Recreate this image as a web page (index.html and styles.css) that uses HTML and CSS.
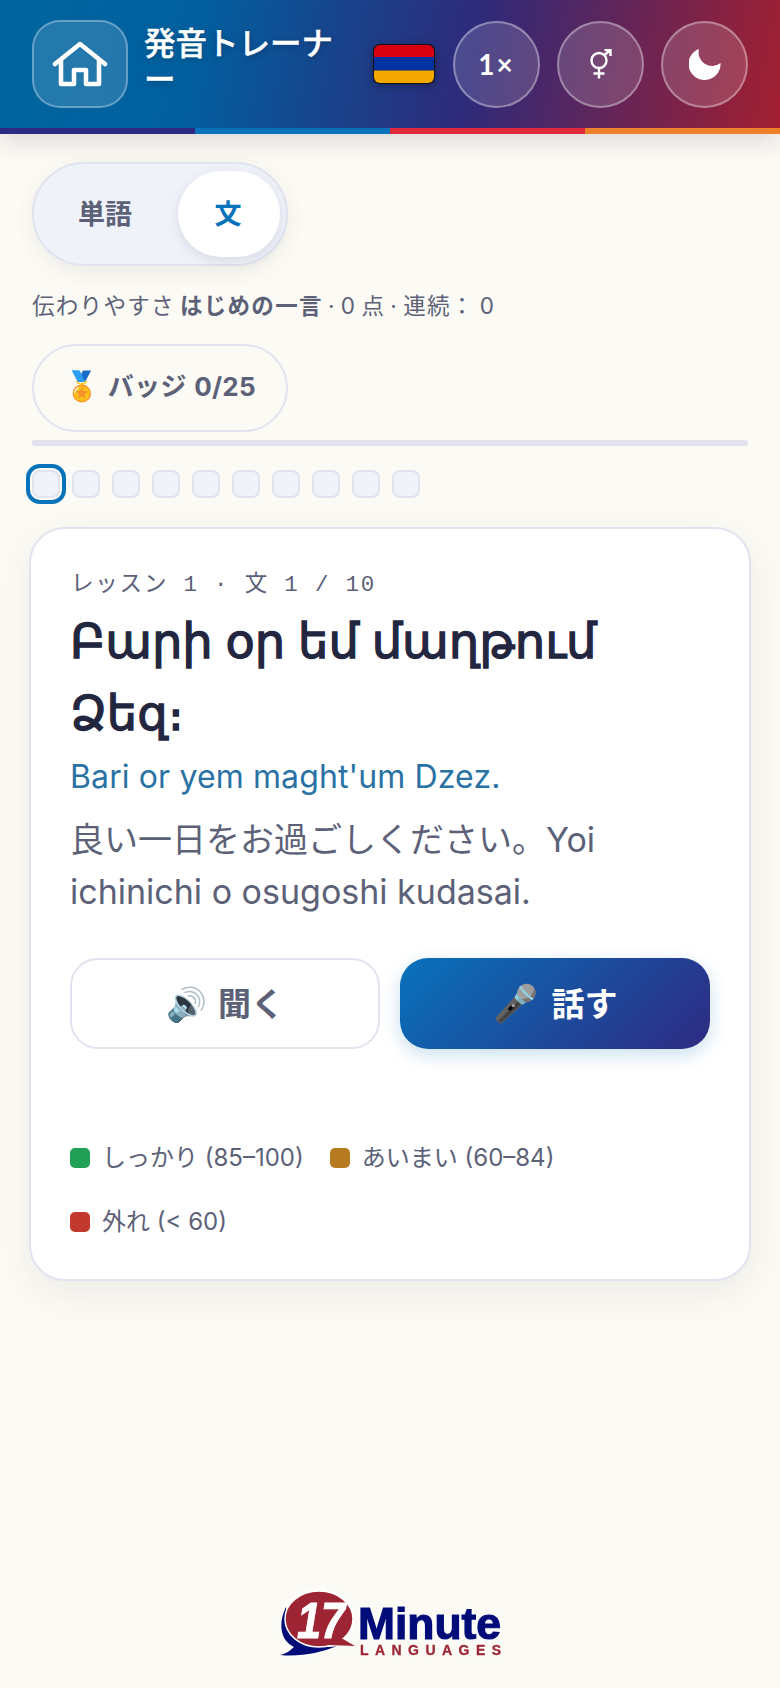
FILE: index.html
```html
<!DOCTYPE html>
<html lang="ja">
<head>
    <meta charset="UTF-8">
    <meta name="viewport" content="width=device-width, initial-scale=1.0">
    <title>発音トレーナー</title>
    <link rel="stylesheet" href="styles.css">
</head>
<body>
    <header class="topbar">
        <div class="topbar-row">
            <button class="home-btn" aria-label="home">
                <svg width="56" height="46" viewBox="0 0 56 46" fill="none" stroke="#fff" stroke-width="4.500" stroke-linecap="round" stroke-linejoin="round">
                    <path d="M3 23 28 3l25 20"/>
                    <path d="M9 19v24h13V29h12v14h13V19"/>
                </svg>
            </button>
            <h1 class="title">発音トレーナー</h1>
            <svg class="flag" width="64" height="42" viewBox="0 0 64 42">
                <rect x="1" y="1" width="62" height="40" rx="7" fill="#111"/>
                <path d="M2 8a6 6 0 0 1 6-6h48a6 6 0 0 1 6 6v6H2z" fill="#d90012"/>
                <rect x="2" y="14" width="60" height="13.500" fill="#0033a0"/>
                <path d="M2 27.500h60V34a6 6 0 0 1-6 6H8a6 6 0 0 1-6-6z" fill="#f2a800"/>
            </svg>
            <button class="round-btn speed">1×</button>
            <button class="round-btn" aria-label="voice">
                <svg width="22" height="30" viewBox="0 0 22 30" fill="none" stroke="#fff" stroke-width="2.400">
                    <circle cx="9" cy="11.500" r="7.500"/>
                    <path d="M14.500 6 20.500 1M14.500 1h6v6M9 19v10.500M3.500 24.500h11"/>
                </svg>
            </button>
            <button class="round-btn" aria-label="theme">
                <svg width="32" height="32" viewBox="0 0 32 32"><path d="M10 1A13.500 13.500 0 0 0 31.500 15 16 16 0 1 1 10 1z" fill="#fff"/></svg>
            </button>
        </div>
        <div class="stripes"><span></span><span></span><span></span><span></span></div>
    </header>

    <main>
        <div class="toggle">
            <span class="toggle-item">単語</span>
            <span class="toggle-item active">文</span>
        </div>

        <p class="status">伝わりやすさ <b>はじめの一言</b> · 0 点 · 連続： 0</p>

        <button class="badge-btn"><span class="emoji-big">🏅</span> バッジ 0/25</button>

        <div class="progress"></div>

        <div class="dots">
            <span class="current"></span>
            <span></span><span></span><span></span><span></span>
            <span></span><span></span><span></span><span></span><span></span>
        </div>

        <section class="card">
            <div class="eyebrow">レッスン 1 · 文 1 / 10</div>
            <h2 class="phrase">Բարի օր եմ մաղթում Ձեզ։</h2>
            <p class="roman">Bari or yem maght'um Dzez.</p>
            <p class="meaning">良い一日をお過ごしください。Yoi ichinichi o osugoshi kudasai.</p>

            <div class="actions">
                <button class="action listen">🔊 聞く</button>
                <button class="action speak"><span class="emoji-big">🎤</span> 話す</button>
            </div>

            <div class="legend">
                <span class="legend-item"><i class="green"></i> しっかり (85–100)</span>
                <span class="legend-item"><i class="amber"></i> あいまい (60–84)</span>
                <span class="legend-item"><i class="red"></i> 外れ (&lt; 60)</span>
            </div>
        </section>
    </main>

    <footer class="brand">
        <svg width="228" height="74" viewBox="0 0 228 74">
            <path d="M10 22C2 38 4 56 18 62 14 66 9 69 4 70 24 72 44 68 61 61 40 66 16 52 10 22z" fill="#000c78"/>
            <ellipse cx="43" cy="34" rx="34" ry="28" fill="#9c2433" stroke="#fff" stroke-width="1.500"/>
            <path d="M60 50 79 61 52 60z" fill="#9c2433"/>
            <text x="21" y="53" class="logo-num" textLength="48" lengthAdjust="spacingAndGlyphs">17</text>
            <text x="82" y="54" class="logo-word" textLength="143" lengthAdjust="spacingAndGlyphs">Minute</text>
            <text x="84" y="70" class="logo-sub" textLength="141">LANGUAGES</text>
        </svg>
    </footer>
</body>
</html>
```

FILE: styles.css
```css
* {
  box-sizing: border-box;
}

:root {
  --bg: #fbfaf4;
  --text: #5c6178;
  --dark: #23263f;
  --line: #e1e3ef;
  --soft: #eff2f9;
  --blue: #0872bb;
  --indigo: #2e2a82;
}

body {
  margin: 0;
  min-height: 100vh;
  display: flex;
  flex-direction: column;
  background-color: var(--bg);
  color: var(--text);
  font-family: Inter, "Noto Sans", "Noto Sans CJK JP", "DejaVu Sans", sans-serif;
}

button {
  font: inherit;
  cursor: pointer;
}

/* header */
.topbar {
  background: linear-gradient(100deg, #00669f 0%, #015f9f 25%, #2e2a7a 60%, #a31f30 100%);
  box-shadow: 0 6px 24px rgba(40, 40, 60, 0.16);
}

.topbar-row {
  display: flex;
  align-items: center;
  height: 128px;
  padding: 0 32px;
}

.home-btn {
  flex: none;
  width: 96px;
  height: 88px;
  display: grid;
  place-items: center;
  padding: 0;
  background: rgba(255, 255, 255, 0.14);
  border: 2px solid rgba(255, 255, 255, 0.3);
  border-radius: 28px;
}

.title {
  width: 200px;
  margin: 0 0 4px 16px;
  color: #fff;
  font-size: 31.500px;
  line-height: 36px;
  font-weight: 500;
  -webkit-text-stroke: 0.400px #fff;
  text-shadow: 0 2px 6px rgba(0, 0, 0, 0.25);
}

.flag {
  flex: none;
  margin-left: 28px;
  filter: drop-shadow(0 2px 4px rgba(0, 0, 0, 0.3));
}

.round-btn {
  flex: none;
  width: 87px;
  height: 87px;
  margin-left: 17px;
  display: grid;
  place-items: center;
  padding: 0;
  color: #fff;
  background: rgba(255, 255, 255, 0.15);
  border: 2px solid rgba(255, 255, 255, 0.35);
  border-radius: 50%;
}

.speed {
  font-family: Lato, sans-serif;
  font-size: 28px;
  font-weight: 700;
  letter-spacing: 2px;
}

.stripes {
  display: grid;
  grid-template-columns: repeat(4, 1fr);
  height: 6px;
}

.stripes span:nth-child(1) { background: var(--indigo); }
.stripes span:nth-child(2) { background: var(--blue); }
.stripes span:nth-child(3) { background: #df2a3c; }
.stripes span:nth-child(4) { background: #f0802a; }

/* controls above the card */
main {
  padding: 28px 29px 0;
}

.toggle {
  display: flex;
  width: 256px;
  height: 104px;
  margin-left: 3px;
  padding: 7px 6px 7px 8px;
  background: var(--soft);
  border: 2px solid var(--line);
  border-radius: 52px;
  box-shadow: 0 6px 20px rgba(60, 60, 90, 0.08);
}

.toggle-item {
  flex: 1;
  display: grid;
  place-items: center;
  padding: 0 10px 4px 0;
  font-size: 27px;
  font-weight: 700;
  border-radius: 44px;
}

.toggle-item.active {
  flex: none;
  width: 102px;
  padding-right: 2px;
  color: var(--blue);
  background: #fff;
  box-shadow: 0 4px 12px rgba(60, 60, 90, 0.12);
}

.status {
  margin: 24px 0 0 3px;
  font-size: 22.500px;
  line-height: 32px;
  letter-spacing: 1.300px;
  word-spacing: -2.500px;
}

.badge-btn {
  display: block;
  width: 256px;
  height: 88px;
  margin: 22px 0 0 3px;
  padding: 0 0 8px;
  color: var(--text);
  font-size: 26px;
  font-weight: 700;
  letter-spacing: 0.300px;
  word-spacing: 1px;
  background: transparent;
  border: 2px solid var(--line);
  border-radius: 44px;
}

.emoji-big {
  font-size: 1.100em;
}

.progress {
  height: 6px;
  margin: 8px 3px 0;
  background: #e2e1ed;
  border-radius: 3px;
}

.dots {
  display: flex;
  gap: 12px;
  margin: 24px 0 0 3px;
}

.dots span {
  width: 28px;
  height: 28px;
  background: var(--soft);
  border: 2px solid var(--line);
  border-radius: 8px;
}

.dots .current {
  outline: 4px solid var(--blue);
  outline-offset: 2px;
}

/* lesson card */
.card {
  margin-top: 29px;
  padding: 42px 39px 41px;
  background: #fff;
  border: 2px solid var(--line);
  border-radius: 36px;
  box-shadow: 0 12px 36px rgba(60, 60, 90, 0.08);
}

.eyebrow {
  padding-left: 1px;
  font-family: "Liberation Mono", "Noto Sans CJK JP", monospace;
  font-size: 22.500px;
  line-height: 28px;
  letter-spacing: 1.800px;
}

.phrase {
  margin: 6px 0 0;
  color: var(--dark);
  font-size: 48px;
  line-height: 72px;
  font-weight: 500;
  -webkit-text-stroke: 1.300px var(--dark);
}

.roman {
  margin: 8px 0 0;
  color: #2a72a4;
  font-size: 32px;
  line-height: 40px;
  letter-spacing: 0.120px;
}

.meaning {
  margin: 17px 0 0;
  font-size: 34px;
  line-height: 52px;
}

.actions {
  display: grid;
  grid-template-columns: 1fr 1fr;
  gap: 20px;
  margin-top: 40px;
}

.action {
  height: 91px;
  padding: 0 0 4px;
  font-size: 33px;
  font-weight: 700;
  word-spacing: 3px;
  border-radius: 28px;
}

.listen {
  color: var(--text);
  background: #fff;
  border: 2px solid var(--line);
}

.speak {
  color: #fff;
  word-spacing: 6px;
  background: linear-gradient(135deg, var(--blue), var(--indigo));
  border: 0;
  box-shadow: 0 6px 18px rgba(8, 114, 187, 0.22);
}

.legend {
  display: flex;
  flex-wrap: wrap;
  gap: 32px 26px;
  margin-top: 93px;
  font-size: 24px;
  line-height: 32px;
}

.legend-item {
  display: flex;
  align-items: center;
  gap: 12px;
}

.legend-item i {
  width: 20px;
  height: 20px;
  border-radius: 5px;
}

.green { background: #1fa055; }
.amber { background: #b67b1e; }
.red { background: #c4392d; }

/* logo */
.brand {
  margin-top: auto;
  padding-bottom: 29px;
}

.brand svg {
  display: block;
  margin: 0 auto;
  filter: drop-shadow(0 0 3px #fff);
}

.logo-num {
  fill: #fff;
  stroke: #fff;
  stroke-width: 1;
  font: italic 700 50px "Liberation Sans", sans-serif;
}

.logo-word {
  fill: #000c78;
  stroke: #000c78;
  stroke-width: 1.200;
  font: 700 45px "Liberation Sans", sans-serif;
}

.logo-sub {
  fill: #9c2433;
  stroke: #9c2433;
  stroke-width: 0.300;
  font: 700 14px "Liberation Sans", sans-serif;
}
```
